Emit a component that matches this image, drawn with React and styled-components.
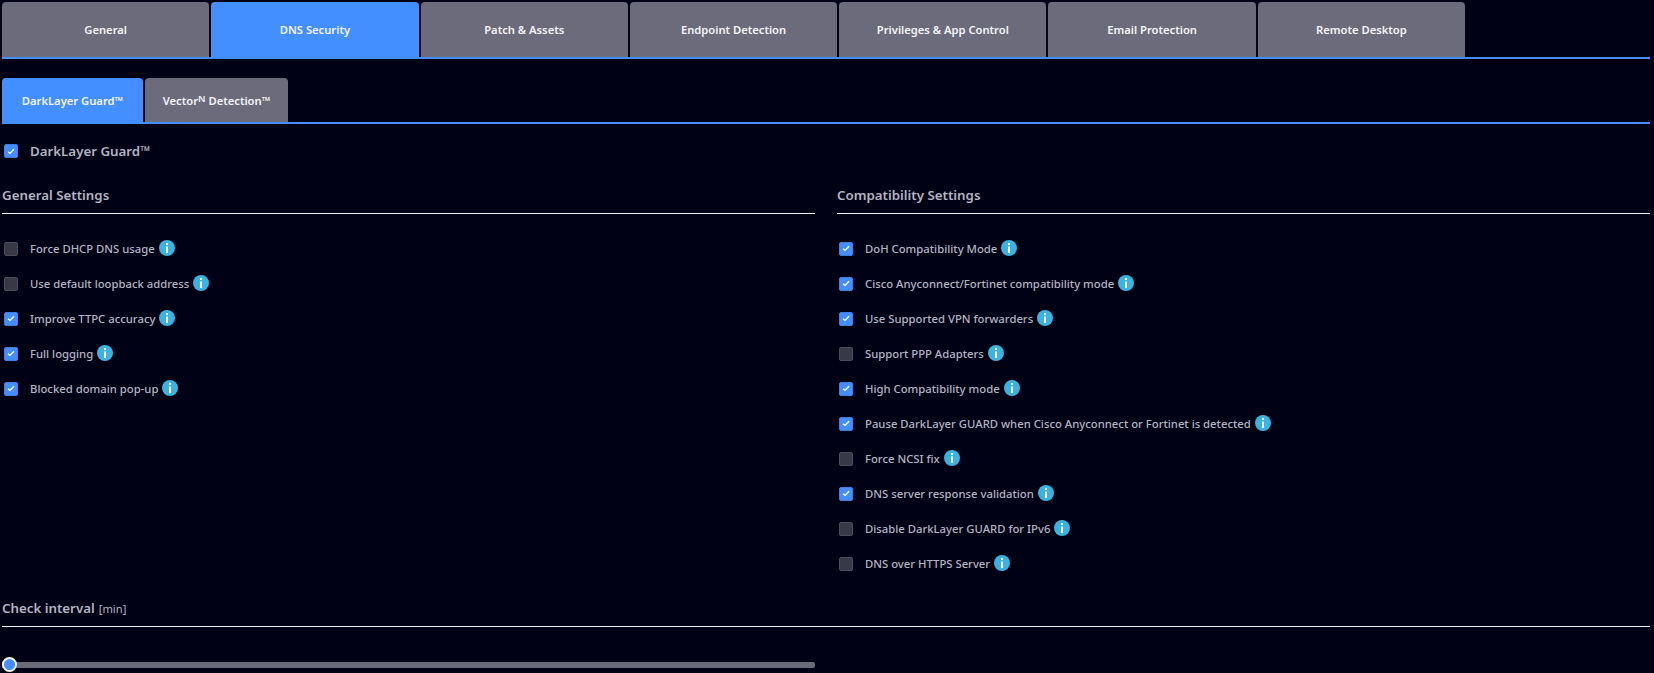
import styled, { createGlobalStyle } from 'styled-components'

const GlobalStyle = createGlobalStyle`
    html, body {
        margin: 0;
        padding: 0;
        background-color: #010116;
    }
    * {
        box-sizing: border-box;
    }
`;

const Page = styled.div`
    height: 673px;
    overflow: hidden;
    padding: 2px 4px 0 2px;
    font-family: "Noto Sans", "Open Sans", sans-serif;
    color: #b3b4c2;
    background-color: #010116;
`;

const TabBar = styled.div`
    display: flex;
    gap: 2px;
    height: ${props => props.$height}px;
    margin-top: ${props => props.$top || 0}px;
    border-bottom: 2px solid #448fff;
`;

const Tab = styled.div`
    display: flex;
    align-items: center;
    justify-content: center;
    width: ${props => props.$width}px;
    height: 100%;
    border-radius: 4px 4px 0 0;
    background-color: ${props => props.$active ? '#448fff' : '#6c6b7b'};
    color: #f4f4f8;
    font-size: 11.2px;
    font-weight: 600;

    sup {
        font-size: 9.5px;
        line-height: 0;
        position: relative;
        top: -1px;
        vertical-align: super;
    }
`;

const MainToggle = styled.div`
    display: flex;
    align-items: center;
    height: 20px;
    margin-top: 17px;
    padding-left: 2px;
    font-size: 13.3px;
    font-weight: 600;
`;

const Columns = styled.div`
    display: grid;
    grid-template-columns: 813px 1fr;
    column-gap: 22px;
    margin-top: 21px;
`;

const SectionTitle = styled.div`
    display: flex;
    align-items: center;
    height: 32px;
    border-bottom: 1px solid #f0f0f4;
    padding-bottom: 6px;
    font-size: 13.3px;
    font-weight: 600;

    small {
        margin-left: 4px;
        font-size: 11.2px;
        font-weight: 400;
        padding-top: 2px;
    }
`;

const OptionList = styled.div`
    display: flex;
    flex-direction: column;
    padding-top: 17px;
`;

const Option = styled.div`
    display: flex;
    align-items: center;
    height: 35px;
    padding-left: 2px;
    font-size: 11.3px;
    font-weight: 500;
`;

const Box = styled.span`
    display: flex;
    align-items: center;
    justify-content: center;
    flex: none;
    width: 14px;
    height: 14px;
    margin-right: 12px;
    border-radius: 2px;
    border: 1px solid ${props => props.$checked ? '#3d7fe6' : '#4c4c5a'};
    background-color: ${props => props.$checked ? '#448fff' : '#383846'};
`;

const InfoIcon = styled.svg`
    flex: none;
    width: 16px;
    height: 16px;
    margin-left: 4px;
    margin-top: -1px;
`;

const CheckInterval = styled.div`
    margin-top: 14px;
`;

const SliderTrack = styled.div`
    position: relative;
    width: 813px;
    height: 6px;
    margin-top: 35px;
    border-radius: 0 2px 2px 0;
    background-color: #6c6b7b;
`;

const SliderThumb = styled.span`
    position: absolute;
    left: 0;
    top: -5px;
    width: 15px;
    height: 15px;
    border-radius: 50%;
    border: 2px solid #f4f4f8;
    background-color: #448fff;
`;

const topTabs = ['General', 'DNS Security', 'Patch & Assets', 'Endpoint Detection', 'Privileges & App Control', 'Email Protection', 'Remote Desktop']

const generalOptions = [
    ['Force DHCP DNS usage', false],
    ['Use default loopback address', false],
    ['Improve TTPC accuracy', true],
    ['Full logging', true],
    ['Blocked domain pop-up', true],
]

const compatOptions = [
    ['DoH Compatibility Mode', true],
    ['Cisco Anyconnect/Fortinet compatibility mode', true],
    ['Use Supported VPN forwarders', true],
    ['Support PPP Adapters', false],
    ['High Compatibility mode', true],
    ['Pause DarkLayer GUARD when Cisco Anyconnect or Fortinet is detected', true],
    ['Force NCSI fix', false],
    ['DNS server response validation', true],
    ['Disable DarkLayer GUARD for IPv6', false],
    ['DNS over HTTPS Server', false],
]

function Checkbox({ checked }) {
    return (
        <Box $checked={checked}>
            {checked && (
                <svg width="8" height="7" viewBox="0 0 8 7" fill="none">
                    <path d="M1 3.8 3 5.4 7 1.2" stroke="#fff" strokeWidth="1.3" />
                </svg>
            )}
        </Box>
    )
}

function Info() {
    return (
        <InfoIcon viewBox="0 0 16 16">
            <circle cx="8" cy="8" r="8" fill="#3bb3e0" />
            <rect x="7" y="3" width="2" height="2" fill="#fff" />
            <rect x="7" y="6.5" width="2" height="6.5" fill="#fff" />
        </InfoIcon>
    )
}

function OptionGroup({ title, options }) {
    return (
        <div>
            <SectionTitle>{title}</SectionTitle>
            <OptionList>
                {options.map(([label, checked]) => (
                    <Option key={label}>
                        <Checkbox checked={checked} />
                        {label}
                        <Info />
                    </Option>
                ))}
            </OptionList>
        </div>
    )
}

export default function App() {
    return (
        <Page>
            <GlobalStyle />
            <TabBar $height={57}>
                {topTabs.map(name => (
                    <Tab key={name} $width={207.3} $active={name === 'DNS Security'}>{name}</Tab>
                ))}
            </TabBar>
            <TabBar $height={46} $top={19}>
                <Tab $width={141} $active>DarkLayer Guard™</Tab>
                <Tab $width={143}>Vector<sup>N</sup>&nbsp;Detection™</Tab>
            </TabBar>
            <MainToggle>
                <Checkbox checked />
                DarkLayer Guard™
            </MainToggle>
            <Columns>
                <OptionGroup title="General Settings" options={generalOptions} />
                <OptionGroup title="Compatibility Settings" options={compatOptions} />
            </Columns>
            <CheckInterval>
                <SectionTitle>Check interval <small>[min]</small></SectionTitle>
                <SliderTrack>
                    <SliderThumb />
                </SliderTrack>
            </CheckInterval>
        </Page>
    )
}
